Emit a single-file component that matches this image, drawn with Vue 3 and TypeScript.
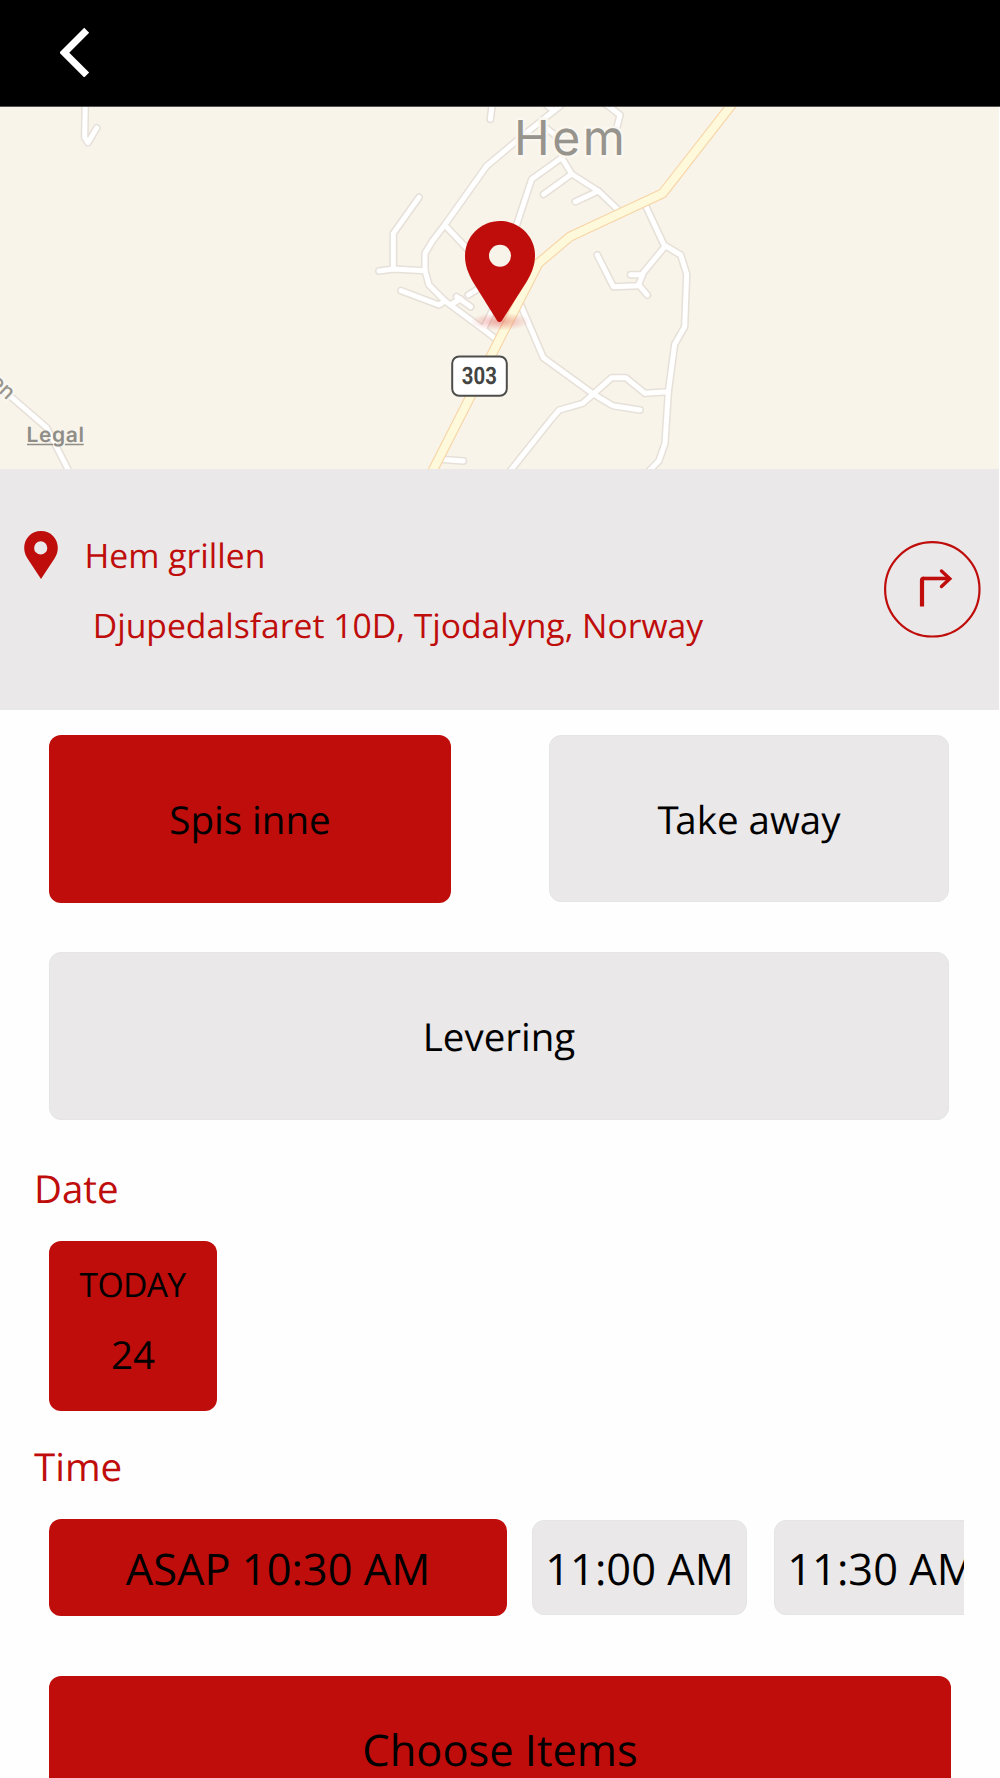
<script setup lang="ts">
import { ref } from 'vue'

interface Option {
  id: string
  label: string
}

const services: Option[] = [
  { id: 'dine-in', label: 'Spis inne' },
  { id: 'take-away', label: 'Take away' },
  { id: 'delivery', label: 'Levering' },
]

const slots: Option[] = [
  { id: '1030', label: 'ASAP 10:30 AM' },
  { id: '1100', label: '11:00 AM' },
  { id: '1130', label: '11:30 AM' },
]

const service = ref('dine-in')
const slot = ref('1030')

// Minor roads of the village, in thirds of a pixel
const villageRoads: string[] = [
  'M458 30 451 88',
  'M620 45 640 62',
  'M680 30 655 52 545 140 440 228 314 405 278 452 255 490V542L267 585 315 633 430 718 468 747',
  'M795 42 808 50 840 75 830 115',
  'M600 100 645 135 668 203',
  'M528 410 575 268 665 203 695 252 775 303 840 365',
  'M695 252 611 313',
  'M775 303 706 335',
  'M916 345 972 465 1022 495 1040 552 1034 710 1004 763 985 905 975 1060 957 1112 925 1145',
  'M970 475 910 548 895 587 820 590 772 495',
  'M908 554H872',
  'M895 583 922 615',
  'M237 322 160 430V537',
  'M117 543 160 537 255 542',
  'M314 405 385 480',
  'M183 602 297 645 315 633',
  'M335 642 362 627',
  'M350 620 392 650',
  'M385 615 425 590',
  'M430 718 460 655',
  'M538 635 610 803 760 912 818 947 900 960',
  'M505 1150 632 990 658 960 728 940 760 912 815 863H857L915 910 985 905',
  'M300 1108 370 1113',
]

const outerRoads: string[] = [
  'M256 300 254 412 264 428 290 384',
  'M-20 1146 35 1192 140 1283 160 1322 210 1420',
]

const mainRoad = 'M1190 25 968 310 690 440 595 520 480 745 270 1158'
</script>

<template>
  <div class="screen">
    <header class="topbar">
      <button class="back" aria-label="Back">
        <svg width="30" height="50" viewBox="0 0 30 50">
          <path d="M26.700 3.300 4.300 25.700 26.700 48" fill="none" stroke="#fff" stroke-width="7" />
        </svg>
      </button>
    </header>

    <svg class="map" viewBox="0 107 999 362" width="999" height="362">
      <defs>
        <radialGradient id="pin-shadow">
          <stop offset="0" stop-color="#d8322c" stop-opacity=".4" />
          <stop offset="1" stop-color="#d8322c" stop-opacity="0" />
        </radialGradient>
      </defs>
      <rect y="107" width="999" height="362" fill="#f8f4ea" />
      <g transform="scale(.33333)" class="road">
        <path v-for="d in outerRoads" :key="d" :d="d" class="casing" />
        <path v-for="d in outerRoads" :key="'f' + d" :d="d" class="fill" />
      </g>
      <g transform="translate(340 90) scale(.33333)" class="road">
        <path v-for="d in villageRoads" :key="d" :d="d" class="casing" />
        <path v-for="d in villageRoads" :key="'f' + d" :d="d" class="fill" />
        <path :d="mainRoad" class="main-casing" />
        <path :d="mainRoad" class="main-fill" />
      </g>
      <text class="street" transform="translate(-11 383.500) rotate(43)">en</text>
      <text class="town" x="514" y="155">Hem</text>
      <text class="legal" x="26.500" y="442">Legal</text>
      <path d="M27 444.500H53M65 444.500H83.700" stroke="#8f8d87" stroke-width="1.700" />

      <rect x="452.200" y="356.500" width="54.600" height="39.300" rx="7" fill="#fff" stroke="#4d4e4c" stroke-width="2" />
      <text class="shield" x="461.800" y="384" textLength="35" lengthAdjust="spacingAndGlyphs">303</text>

      <ellipse cx="500" cy="321.500" rx="30" ry="9" fill="url(#pin-shadow)" />
      <path
        d="M500 221c-19.400 0-35 15.500-35 34.800 0 10 3 17.200 8 26.200L497 320.500q2.500 3 5 0L526.500 282c5.500-9 8.500-17.200 8.500-26.700 0-19-15.600-34.300-35-34.300z"
        fill="#bf0d0b"
      />
      <circle cx="500" cy="255.700" r="11" fill="#f8f4ea" />
    </svg>

    <section class="place">
      <svg class="pin" width="34" height="48" viewBox="0 0 34 48">
        <path
          fill="#bf0d0b"
          fill-rule="evenodd"
          d="M17 0C7.300 0 .2 7.500.2 16.800c0 4.200 1.200 7.400 3.300 10.700L17 48 30.500 27.500c2.100-3.300 3.300-6.500 3.300-10.700C33.800 7.500 26.700 0 17 0zm-.3 10.300a6.600 6.600 0 1 1 0 13.200 6.600 6.600 0 0 1 0-13.200z"
        />
      </svg>
      <div class="address">
        <p>Hem grillen</p>
        <p class="street-line">Djupedalsfaret 10D, Tjodalyng, Norway</p>
      </div>
      <button class="directions" aria-label="Directions">
        <svg width="97" height="97" viewBox="0 0 97 97" fill="none" stroke="#bf0d0b">
          <circle cx="48.300" cy="48.300" r="47.200" stroke-width="2.200" />
          <path d="M38 65.500V39.500Q38 37.500 40 37.500" stroke-width="4.200" />
          <path d="M39.500 37.500H65.500" stroke-width="3.600" />
          <path d="M57.500 30 65.800 37.700 57.500 45.500" stroke-width="3.400" stroke-linecap="round" />
        </svg>
      </button>
    </section>

    <section class="services">
      <button
        v-for="s in services"
        :key="s.id"
        class="choice"
        :class="[s.id, { selected: s.id === service }]"
        @click="service = s.id"
      >
        <span class="label">{{ s.label }}</span>
      </button>
    </section>

    <h2 class="heading">Date</h2>
    <button class="choice selected day">
      <span class="day-name">TODAY</span>
      <span class="day-number">24</span>
    </button>

    <h2 class="heading time-heading">Time</h2>
    <div class="slots">
      <button
        v-for="s in slots"
        :key="s.id"
        class="choice slot"
        :class="{ selected: s.id === slot }"
        @click="slot = s.id"
      >
        {{ s.label }}
      </button>
    </div>

    <button class="choice selected submit">Choose Items</button>
  </div>
</template>

<style>
body {
  margin: 0;
  background: #fefefe;
}
</style>

<style scoped>
.screen {
  box-sizing: border-box;
  width: 1000px;
  height: 1778px;
  overflow: hidden;
  background: #fefefe;
  font-family: 'Open Sans', 'Noto Sans', sans-serif;
  text-rendering: geometricPrecision;
  color: #000;
}

button {
  margin: 0;
  padding: 0;
  border: 0;
  background: none;
  font: inherit;
  color: inherit;
  text-rendering: inherit;
}

.topbar {
  box-sizing: border-box;
  height: 107px;
  padding: 27px 0 0 60px;
  background: #000;
  border-bottom: 1px solid #55534f;
}

.back,
.directions {
  display: block;
  line-height: 0;
}

.map {
  display: block;
}

.road path {
  fill: none;
  stroke-linecap: round;
  stroke-linejoin: round;
}

.road .casing {
  stroke: #e6e0d8;
  stroke-width: 24;
}

.road .fill {
  stroke: #fff;
  stroke-width: 15;
}

.road .main-casing {
  stroke: #f8d5a8;
  stroke-width: 31;
  stroke-linejoin: miter;
}

.road .main-fill {
  stroke: #fdf9da;
  stroke-width: 24;
  stroke-linejoin: miter;
}

.map text {
  font-family: Inter, sans-serif;
  fill: #96948d;
}

.map .town {
  font-size: 48px;
  letter-spacing: 2.600px;
  paint-order: stroke;
  stroke: #faf7f0;
  stroke-width: 5px;
}

.map .street {
  font-size: 21px;
  font-weight: 500;
  paint-order: stroke;
  stroke: #faf7f0;
  stroke-width: 4px;
}

.map .legal {
  font-size: 21px;
  font-weight: 600;
  letter-spacing: 0.600px;
  fill: #8f8d87;
}

.map .shield {
  font-family: Roboto, sans-serif;
  font-size: 24px;
  font-weight: 700;
  fill: #444543;
}

.place {
  display: flex;
  align-items: flex-start;
  box-sizing: border-box;
  width: 999px;
  height: 241px;
  padding: 61px 18px 0 24px;
  background: #eae8e9;
  color: #bf0d0b;
}

.pin {
  margin-top: 1px;
}

.address {
  flex: 1;
  padding-left: 26.500px;
  font-size: 33.700px;
  line-height: 50px;
  white-space: nowrap;
}

.address p {
  margin: 0;
}

.address .street-line {
  margin: 20px 0 0 8.200px;
}

.directions {
  margin-top: 11px;
}

.services {
  display: grid;
  grid-template-columns: 402px 400px;
  grid-template-rows: 168px 168px;
  column-gap: 98px;
  row-gap: 49px;
  align-items: start;
  padding: 25px 0 0 49px;
}

.choice {
  display: flex;
  align-items: center;
  justify-content: center;
  box-sizing: border-box;
  height: 167px;
  padding-top: 4px;
  border: 1px solid #e5e5e5;
  border-radius: 12px;
  background: #eae8e9;
  font-size: 38.500px;
  line-height: 53px;
  white-space: nowrap;
}

.choice.selected {
  height: 168px;
  padding-top: 3px;
  border: 0;
  background: #bf0d0b;
}

.choice.delivery {
  grid-column: 1 / -1;
  height: 168px;
  padding-top: 3px;
}

.label {
  display: block;
}

.take-away .label::first-letter {
  letter-spacing: -3.500px;
}

.heading {
  margin: 44px 0 0 34px;
  font-size: 38.500px;
  font-weight: 400;
  line-height: 51px;
  color: #bf0d0b;
}

.choice.day {
  flex-direction: column;
  justify-content: flex-start;
  width: 168px;
  height: 170px;
  margin: 26px 0 0 49px;
  padding-top: 0;
}

.day-name {
  padding: 18px 1px 0 0;
  font-size: 33.700px;
  letter-spacing: -0.700px;
  line-height: 50px;
}

.day-number {
  padding-top: 20px;
  line-height: 53px;
}

.time-heading {
  margin-top: 31px;
}

.slots {
  display: flex;
  align-items: center;
  gap: 27px;
  width: 915px;
  height: 97px;
  margin: 26px 0 0 49px;
  overflow: hidden;
}

.choice.slot {
  flex: none;
  width: 215px;
  height: 95px;
  padding-top: 2px;
  font-size: 43.400px;
}

.choice.slot.selected {
  width: 458px;
  height: 97px;
  margin-right: -2px;
}

.choice.submit {
  width: 902px;
  height: 145px;
  margin: 60px 0 0 49px;
  padding-top: 2px;
  font-size: 43.400px;
}
</style>
